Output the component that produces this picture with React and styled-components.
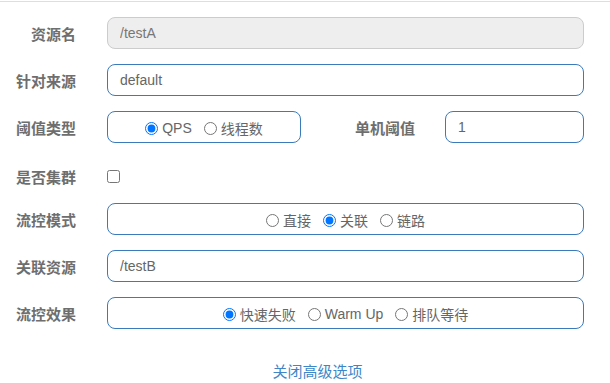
import React, { useState } from 'react'
import styled, { createGlobalStyle } from 'styled-components'

const GlobalStyle = createGlobalStyle`
  html, body {
    margin: 0;
    padding: 0;
    background: #fff;
  }
  body {
    font-family: "Liberation Sans", "Noto Sans CJK SC", sans-serif;
    color: #555;
  }
`

export default function App() {
  const [grade, setGrade] = useState('qps')
  const [strategy, setStrategy] = useState('relate')
  const [behavior, setBehavior] = useState('fast')
  const [cluster, setCluster] = useState(false)

  return (
    <Page>
      <GlobalStyle />
      <Form>
        <Row>
          <Label>资源名</Label>
          <Input value="/testA" disabled readOnly />
        </Row>
        <Row>
          <Label>针对来源</Label>
          <Input defaultValue="default" />
        </Row>
        <Row>
          <Label>阈值类型</Label>
          <RadioGroup $width="194px">
            <RadioOption label="QPS" checked={grade === 'qps'} onChange={() => setGrade('qps')} />
            <RadioOption label="线程数" checked={grade === 'thread'} onChange={() => setGrade('thread')} />
          </RadioGroup>
          <SideLabel>单机阈值</SideLabel>
          <Input defaultValue="1" $width="139px" />
        </Row>
        <CheckRow>
          <Label>是否集群</Label>
          <Checkbox type="checkbox" checked={cluster} onChange={(e) => setCluster(e.target.checked)} />
        </CheckRow>
        <Row>
          <Label>流控模式</Label>
          <RadioGroup>
            <RadioOption label="直接" checked={strategy === 'direct'} onChange={() => setStrategy('direct')} />
            <RadioOption label="关联" checked={strategy === 'relate'} onChange={() => setStrategy('relate')} />
            <RadioOption label="链路" checked={strategy === 'chain'} onChange={() => setStrategy('chain')} />
          </RadioGroup>
        </Row>
        <Row>
          <Label>关联资源</Label>
          <Input defaultValue="/testB" />
        </Row>
        <Row>
          <Label>流控效果</Label>
          <RadioGroup>
            <RadioOption label="快速失败" checked={behavior === 'fast'} onChange={() => setBehavior('fast')} />
            <RadioOption label="Warm Up" checked={behavior === 'warm'} onChange={() => setBehavior('warm')} />
            <RadioOption label="排队等待" checked={behavior === 'queue'} onChange={() => setBehavior('queue')} />
          </RadioGroup>
        </Row>
        <LinkRow>
          <ToggleLink href="#" onClick={(e) => e.preventDefault()}>关闭高级选项</ToggleLink>
        </LinkRow>
      </Form>
    </Page>
  )
}

function RadioOption({ label, checked, onChange }) {
  return (
    <Option>
      <Radio type="radio" checked={checked} onChange={onChange} />
      <span>{label}</span>
    </Option>
  )
}

const Page = styled.div`
  width: 610px;
  height: 383px;
  margin-top: 1px;
  border-top: 1px solid #dedede;
  box-sizing: border-box;
  overflow: hidden;
`

const Form = styled.div`
  display: flex;
  flex-direction: column;
  gap: 15px;
  padding: 15px 26px 0 0;
`

const Row = styled.div`
  display: flex;
  align-items: center;
  height: 32px;
`

const CheckRow = styled(Row)`
  height: 30px;
  padding-top: 7px;
  box-sizing: border-box;
`

const Label = styled.label`
  width: 76px;
  margin-right: 31px;
  flex-shrink: 0;
  text-align: right;
  font-size: 15px;
  font-weight: bold;
  color: #6e6e6e;
  white-space: nowrap;
`

const SideLabel = styled(Label)`
  width: auto;
  flex: 1;
  margin-right: 30px;
`

const Input = styled.input`
  box-sizing: border-box;
  height: 32px;
  width: ${(p) => p.$width || 'auto'};
  flex: ${(p) => (p.$width ? '0 0 auto' : '1')};
  min-width: 0;
  padding: 0 12px;
  border: 1px solid #3a7bbb;
  border-radius: 8px;
  font-family: "Liberation Sans", "Noto Sans CJK SC", sans-serif;
  font-size: 14px;
  color: #666;
  background: #fff;
  outline: none;

  &:disabled {
    background: #eee;
    border-color: #ccc;
    color: #777;
  }
`

const RadioGroup = styled.div`
  box-sizing: border-box;
  height: 32px;
  width: ${(p) => p.$width || 'auto'};
  flex: ${(p) => (p.$width ? '0 0 auto' : '1')};
  display: flex;
  align-items: center;
  justify-content: center;
  gap: 12px;
  border: 1px solid #3a7bbb;
  border-radius: 8px;
  padding-top: 2px;
`

const Option = styled.label`
  display: flex;
  align-items: center;
  font-size: 14px;
  color: #666;
  white-space: nowrap;
`

const Radio = styled.input`
  width: 13px;
  height: 13px;
  margin: 0 4px 0 0;
`

const Checkbox = styled.input`
  width: 13px;
  height: 13px;
  margin: 0;
`

const LinkRow = styled.div`
  margin-top: 16px;
  padding-left: 51px;
  text-align: center;
`

const ToggleLink = styled.a`
  font-size: 15px;
  color: #3d87c9;
  text-decoration: none;
`
